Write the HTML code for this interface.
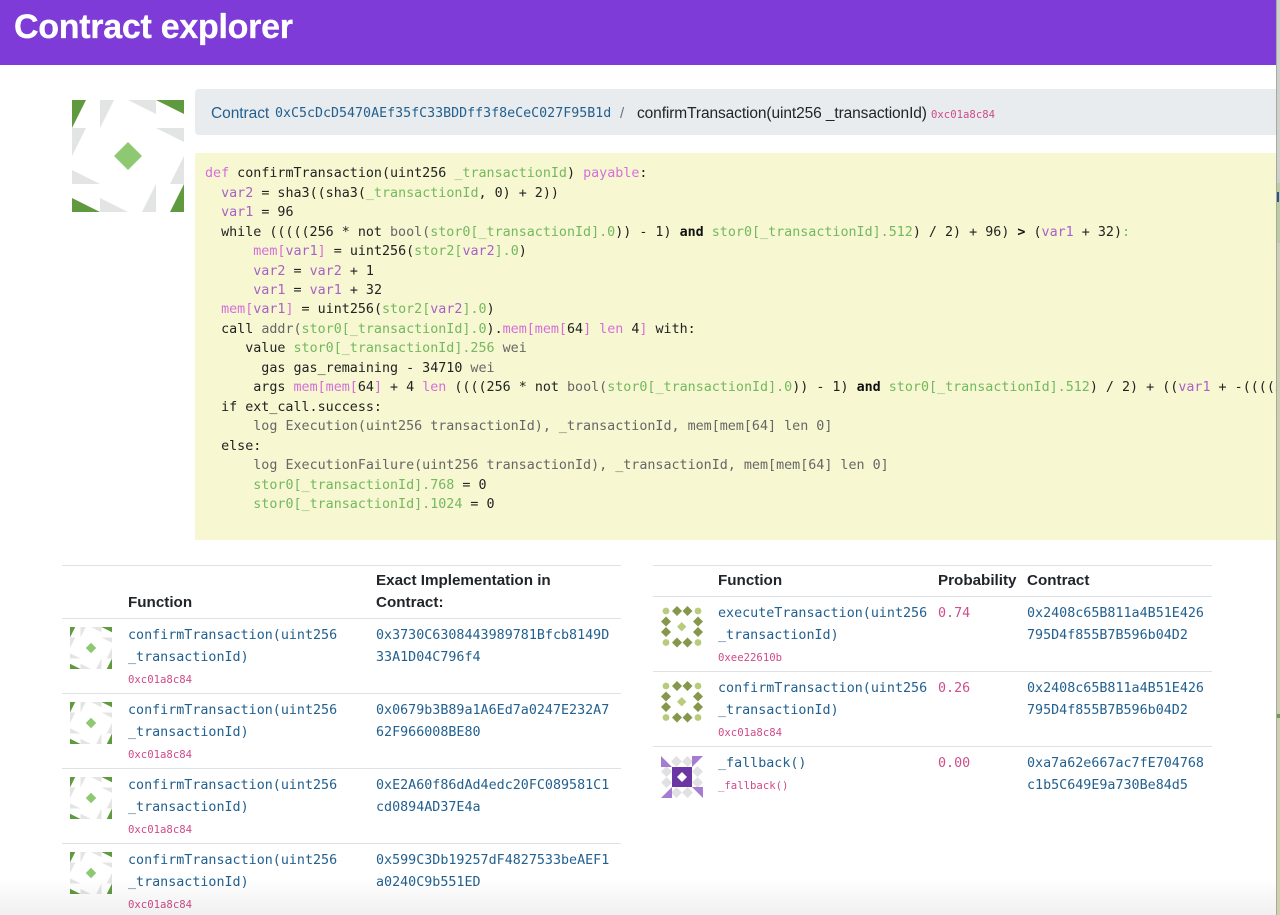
<!DOCTYPE html>
<html lang="en">
<head>
<meta charset="utf-8">
<title>Contract explorer</title>
<style>
html,body{margin:0;padding:0;width:1280px;height:915px;overflow:hidden;background:#fff}
body{position:relative;font-family:"Liberation Sans",sans-serif;color:#212529}
.a{position:absolute;white-space:nowrap}
.m{font-family:"DejaVu Sans Mono","Liberation Mono",monospace;font-size:13.36px;line-height:22px;color:#22608f}
.s{font-family:"DejaVu Sans Mono","Liberation Mono",monospace;font-size:10.65px;line-height:14px;color:#cf4a8a}
.h{font-weight:bold;font-size:15.2px;line-height:22px;color:#212529}
.l{position:absolute;height:1px;background:#dee2e6}
.p{color:#cc4f8b}
pre{margin:0;font-family:"DejaVu Sans Mono","Liberation Mono",monospace;font-size:13.36px;line-height:19.47px;color:#222}
.k{color:#d56fd8}.v{color:#a862c4}.g{color:#74b85f}.y{color:#666}
b{color:#111}
svg{position:absolute;display:block}
</style>
</head>
<body>
<svg width="0" height="0" style="position:absolute">
<defs>
<g id="tri">
<path fill="#5f9a3f" d="M0 0H14L0 28ZM84 0H112V14ZM0 98L28 112H0ZM112 84V112H98Z"/>
<path fill="#e3e4e4" d="M28 0H42L28 28ZM56 0H84V14ZM0 28H14L0 56ZM84 28H112V42ZM0 70L28 84H0ZM112 56V84H98ZM28 98L56 112H28ZM84 84V112H70Z"/>
<path fill="#8fc873" d="M56 42L70 56L56 70L42 56Z"/>
</g>
<g id="dots">
<g fill="#b9cb7d"><circle cx="5" cy="5" r="3.4"/><circle cx="37" cy="5" r="3.4"/><circle cx="5" cy="36.5" r="3.4"/><circle cx="37" cy="36.5" r="3.4"/><path d="M20.7 16L25.4 20.700L20.700 25.400L16 20.700Z"/></g>
<g fill="#85974a"><path d="M16 0L21 5L16 10L11 5ZM26.500 0L31.500 5L26.500 10L21.500 5ZM5 10.500L10 15.500L5 20.500L0 15.500ZM37 10.500L42 15.500L37 20.500L32 15.500ZM5 21L10 26L5 31L0 26ZM37 21L42 26L37 31L32 26ZM16 31.500L21 36.500L16 41.500L11 36.500ZM26.500 31.500L31.500 36.500L26.500 41.500L21.500 36.500Z"/></g>
</g>
</defs>
</svg>

<div class="a" style="left:0;top:0;width:1276px;height:65px;background:#7e3bd8"></div>
<div class="a" style="left:14px;top:7px;font-size:34px;line-height:40px;font-weight:bold;color:#fff;letter-spacing:-.28px;-webkit-text-stroke:.3px #fff">Contract explorer</div>

<svg style="left:72px;top:100px" width="112" height="112" viewBox="0 0 112 112"><use href="#tri"/></svg>

<div class="a" style="left:195px;top:89px;width:1081px;height:46px;background:#e9ecef;border-radius:4px 0 0 4px"></div>
<div class="a" style="left:211px;top:103px;font-size:15.500px;line-height:22px;color:#22608f;letter-spacing:-.05px">Contract</div>
<div class="a m" style="left:275px;top:103px;font-size:13.3px">0xC5cDcD5470AEf35fC33BDDff3f8eCeC027F95B1d</div>
<div class="a" style="left:620px;top:103px;font-size:15px;line-height:22px;color:#6c757d">/</div>
<div class="a" style="left:637px;top:103px;font-size:15.500px;line-height:22px;color:#212529;letter-spacing:-.1px">confirmTransaction(uint256 _transactionId)</div>
<div class="a s" style="left:931px;top:108px">0xc01a8c84</div>

<div class="a" style="left:195px;top:153px;width:1081px;height:387px;background:#f7f7d2;overflow:hidden">
<pre style="position:absolute;left:10px;top:11.200px"><span class="k">def</span> confirmTransaction(uint256 <span class="g">_transactionId</span>) <span class="k">payable</span>:
  <span class="v">var2</span> = sha3((sha3(<span class="g">_transactionId</span>, 0) + 2))
  <span class="v">var1</span> = 96
  while (((((256 * not <span class="y">bool(</span><span class="g">stor0[_transactionId].0</span>)) - 1) <b>and</b> <span class="g">stor0[_transactionId].512</span>) / 2) + 96) <b>&gt;</b> (<span class="v">var1</span> + 32)<span class="g">:</span>
      <span class="k">mem[</span><span class="v">var1</span><span class="k">]</span> = uint256(<span class="g">stor2[</span><span class="v">var2</span><span class="g">].0</span>)
      <span class="v">var2</span> = <span class="v">var2</span> + 1
      <span class="v">var1</span> = <span class="v">var1</span> + 32
  <span class="k">mem[</span><span class="v">var1</span><span class="k">]</span> = uint256(<span class="g">stor2[</span><span class="v">var2</span><span class="g">].0</span>)
  call <span class="y">addr(</span><span class="g">stor0[_transactionId].0</span>).<span class="k">mem[mem[</span>64<span class="k">]</span> <span class="k">len</span> 4<span class="k">]</span> with:
     value <span class="g">stor0[_transactionId].256</span> <span class="y">wei</span>
       gas gas_remaining - 34710 <span class="y">wei</span>
      args <span class="k">mem[mem[</span>64<span class="k">]</span> + 4 <span class="k">len</span> ((((256 * not <span class="y">bool(</span><span class="g">stor0[_transactionId].0</span>)) - 1) <b>and</b> <span class="g">stor0[_transactionId].512</span>) / 2) + ((<span class="v">var1</span> + -((((256 * not
  if ext_call.success:
      <span class="y">log Execution(uint256 transactionId), _transactionId, mem[mem[64] len 0]</span>
  else:
      <span class="y">log ExecutionFailure(uint256 transactionId), _transactionId, mem[mem[64] len 0]</span>
      <span class="g">stor0[_transactionId].768</span> = 0
      <span class="g">stor0[_transactionId].1024</span> = 0</pre>
</div>

<!-- Left table -->
<div class="l" style="left:62px;top:565px;width:559px"></div>
<div class="a h" style="left:376px;top:570px">Exact Implementation in</div>
<div class="a h" style="left:128px;top:592px">Function</div>
<div class="a h" style="left:376px;top:592px">Contract:</div>
<div class="l" style="left:62px;top:618px;width:559px"></div>

<svg style="left:70px;top:627px" width="42" height="42" viewBox="0 0 112 112"><use href="#tri"/></svg>
<div class="a m" style="left:128px;top:625px">confirmTransaction(uint256</div>
<div class="a m" style="left:128px;top:647px">_transactionId)</div>
<div class="a s" style="left:128px;top:673px">0xc01a8c84</div>
<div class="a m" style="left:376px;top:625px">0x3730C6308443989781Bfcb8149D</div>
<div class="a m" style="left:376px;top:647px">33A1D04C796f4</div>
<div class="l" style="left:62px;top:693px;width:559px"></div>

<svg style="left:70px;top:702px" width="42" height="42" viewBox="0 0 112 112"><use href="#tri"/></svg>
<div class="a m" style="left:128px;top:700px">confirmTransaction(uint256</div>
<div class="a m" style="left:128px;top:722px">_transactionId)</div>
<div class="a s" style="left:128px;top:748px">0xc01a8c84</div>
<div class="a m" style="left:376px;top:700px">0x0679b3B89a1A6Ed7a0247E232A7</div>
<div class="a m" style="left:376px;top:722px">62F966008BE80</div>
<div class="l" style="left:62px;top:768px;width:559px"></div>

<svg style="left:70px;top:777px" width="42" height="42" viewBox="0 0 112 112"><use href="#tri"/></svg>
<div class="a m" style="left:128px;top:775px">confirmTransaction(uint256</div>
<div class="a m" style="left:128px;top:797px">_transactionId)</div>
<div class="a s" style="left:128px;top:823px">0xc01a8c84</div>
<div class="a m" style="left:376px;top:775px">0xE2A60f86dAd4edc20FC089581C1</div>
<div class="a m" style="left:376px;top:797px">cd0894AD37E4a</div>
<div class="l" style="left:62px;top:843px;width:559px"></div>

<svg style="left:70px;top:852px" width="42" height="42" viewBox="0 0 112 112"><use href="#tri"/></svg>
<div class="a m" style="left:128px;top:850px">confirmTransaction(uint256</div>
<div class="a m" style="left:128px;top:872px">_transactionId)</div>
<div class="a s" style="left:128px;top:898px">0xc01a8c84</div>
<div class="a m" style="left:376px;top:850px">0x599C3Db19257dF4827533beAEF1</div>
<div class="a m" style="left:376px;top:872px">a0240C9b551ED</div>

<!-- Right table -->
<div class="l" style="left:653px;top:565px;width:559px"></div>
<div class="a h" style="left:718px;top:570px">Function</div>
<div class="a h" style="left:938px;top:570px">Probability</div>
<div class="a h" style="left:1027px;top:570px">Contract</div>
<div class="l" style="left:653px;top:596px;width:559px"></div>

<svg style="left:661px;top:606px;overflow:visible" width="42" height="42" viewBox="0 0 42 42"><use href="#dots"/></svg>
<div class="a m" style="left:718px;top:603px">executeTransaction(uint256</div>
<div class="a m" style="left:718px;top:625px">_transactionId)</div>
<div class="a s" style="left:718px;top:651px">0xee22610b</div>
<div class="a m p" style="left:938px;top:603px">0.74</div>
<div class="a m" style="left:1027px;top:603px">0x2408c65B811a4B51E426</div>
<div class="a m" style="left:1027px;top:625px">795D4f855B7B596b04D2</div>
<div class="l" style="left:653px;top:671px;width:559px"></div>

<svg style="left:661px;top:681px;overflow:visible" width="42" height="42" viewBox="0 0 42 42"><use href="#dots"/></svg>
<div class="a m" style="left:718px;top:678px">confirmTransaction(uint256</div>
<div class="a m" style="left:718px;top:700px">_transactionId)</div>
<div class="a s" style="left:718px;top:726px">0xc01a8c84</div>
<div class="a m p" style="left:938px;top:678px">0.26</div>
<div class="a m" style="left:1027px;top:678px">0x2408c65B811a4B51E426</div>
<div class="a m" style="left:1027px;top:700px">795D4f855B7B596b04D2</div>
<div class="l" style="left:653px;top:746px;width:559px"></div>

<svg style="left:661px;top:756px;overflow:visible" width="42" height="42" viewBox="0 0 42 42">
<path fill="#e1e1e3" d="M15.500 0L21 5.500L15.500 11L10 5.500ZM26.500 0L32 5.500L26.500 11L21 5.500ZM15.500 31L21 36.500L15.500 42L10 36.500ZM26.500 31L32 36.500L26.500 42L21 36.500ZM5.500 10L11 15.500L5.500 21L0 15.500ZM5.500 21L11 26.500L5.500 32L0 26.500ZM36.500 10L42 15.500L36.500 21L31 15.500ZM36.500 21L42 26.500L36.500 32L31 26.500Z"/>
<path fill="#a67bd2" d="M0 0L11 11H0ZM31 0H42L31 11ZM31 31H42V42ZM0 42L11 31V42Z"/>
<path fill="#6b36a3" d="M11 11H31V31H11Z"/>
<path fill="#fff" d="M21 16L26 21L21 26L16 21Z"/>
</svg>
<div class="a m" style="left:718px;top:753px">_fallback()</div>
<div class="a s" style="left:718px;top:779px">_fallback()</div>
<div class="a m p" style="left:938px;top:753px">0.00</div>
<div class="a m" style="left:1027px;top:753px">0xa7a62e667ac7fE704768</div>
<div class="a m" style="left:1027px;top:775px">c1b5C649E9a730Be84d5</div>

<!-- Right edge sliver -->
<div class="a" style="left:1276px;top:0;width:4px;height:915px;background:linear-gradient(#cfcfcf 0,#cfcfcf 140px,#cdcdb4 300px,#cfcfb2 915px);border-left:1px solid #a9a99a;box-sizing:border-box"></div>
<div class="a" style="left:1277px;top:183px;width:3px;height:60px;background:#bccba4"></div>
<div class="a" style="left:1277px;top:192px;width:2px;height:10px;background:#2f4f8f"></div>
<div class="a" style="left:1277px;top:714px;width:3px;height:4px;background:#6f9a5a"></div>

<!-- Bottom fade -->
<div class="a" style="left:0;top:878px;width:1276px;height:37px;background:linear-gradient(#fff,#f0f0f0);mix-blend-mode:multiply"></div>
</body>
</html>
